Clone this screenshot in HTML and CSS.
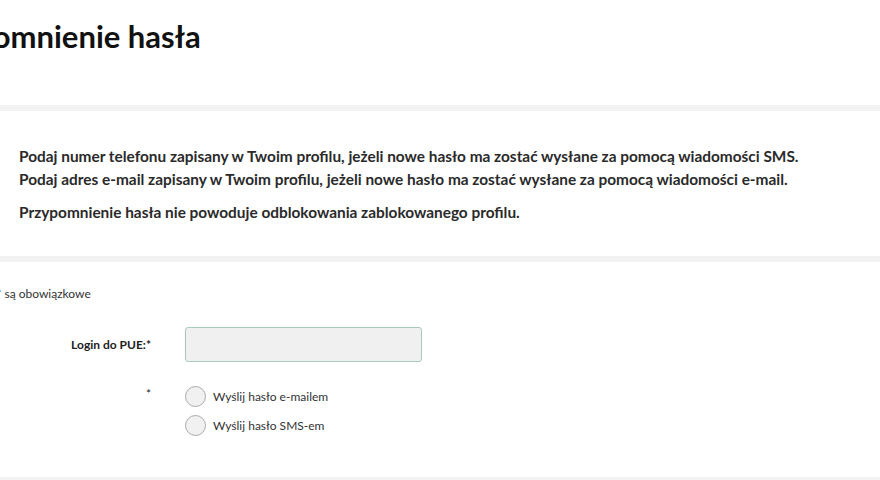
FILE: index.html
```html
<!DOCTYPE html>
<html lang="pl">
<head>
    <meta charset="UTF-8">
    <title>Przypomnienie hasła</title>
    <link rel="stylesheet" href="styles.css">
</head>
<body>
    <div class="page">
        <h1 class="page-title">Przypomnienie hasła</h1>

        <div class="info-box">
            <p>Podaj numer telefonu zapisany w Twoim profilu, jeżeli nowe hasło ma zostać wysłane za pomocą wiadomości SMS.<br>
            Podaj adres e-mail zapisany w Twoim profilu, jeżeli nowe hasło ma zostać wysłane za pomocą wiadomości e-mail.</p>
            <p>Przypomnienie hasła nie powoduje odblokowania zablokowanego profilu.</p>
        </div>

        <form class="form-box">
            <p class="required-note">Pola oznaczone * są obowiązkowe</p>

            <div class="form-row">
                <label class="form-label" for="login">Login do PUE:*</label>
                <input class="form-input" type="text" id="login">
            </div>

            <div class="form-row form-row-radio">
                <span class="form-label">*</span>
                <div class="radio-list">
                    <label class="radio-item"><input type="radio" name="channel"><span class="radio-dot"></span>Wyślij hasło e-mailem</label>
                    <label class="radio-item"><input type="radio" name="channel"><span class="radio-dot"></span>Wyślij hasło SMS-em</label>
                </div>
            </div>
        </form>
    </div>
</body>
</html>
```

FILE: styles.css
```css
body {
    margin: 0;
    padding: 0;
    font-family: Lato, "Open Sans", sans-serif;
    color: #222;
    background: #fff;
    overflow: hidden;
}

.page {
    padding-top: 15px;
}

.page-title {
    margin: 0 0 0 -86px;
    font-size: 31px;
    font-weight: 700;
    line-height: 42px;
    color: #111;
}

.info-box {
    margin-top: 48px;
    border-top: 6px solid #f2f2f2;
    border-bottom: 6px solid #f2f2f2;
    padding: 34px 19px 32px;
}

.info-box p {
    margin: 0 0 10px;
    font-size: 15.4px;
    font-weight: 700;
    line-height: 23px;
    color: #2a2a2a;
}

.info-box p:last-child {
    margin-bottom: 0;
}

.form-box {
    padding: 24px 0 41px;
    border-bottom: 3px solid #f2f2f2;
}

.required-note {
    margin: 0 0 26px -88px;
    font-size: 12px;
    color: #333;
}

.form-row {
    display: flex;
    align-items: center;
    gap: 34px;
}

.form-label {
    width: 151px;
    text-align: right;
    font-size: 12px;
    font-weight: 700;
    color: #222;
}

.form-input {
    width: 237px;
    height: 35px;
    box-sizing: border-box;
    border: 1px solid #a9c9b9;
    border-radius: 3px;
    background: #eff0ef;
}

.form-row-radio {
    align-items: flex-start;
    margin-top: 24px;
}

.form-row-radio .form-label {
    font-weight: 400;
    line-height: 16px;
}

.radio-list {
    display: flex;
    flex-direction: column;
    gap: 8px;
}

.radio-item {
    display: flex;
    align-items: center;
    gap: 7px;
    font-size: 12px;
    color: #333;
}

.radio-item input {
    display: none;
}

.radio-dot {
    width: 19px;
    height: 19px;
    border: 1px solid #aaa;
    border-radius: 50%;
    background: #f0f1f0;
}
```
